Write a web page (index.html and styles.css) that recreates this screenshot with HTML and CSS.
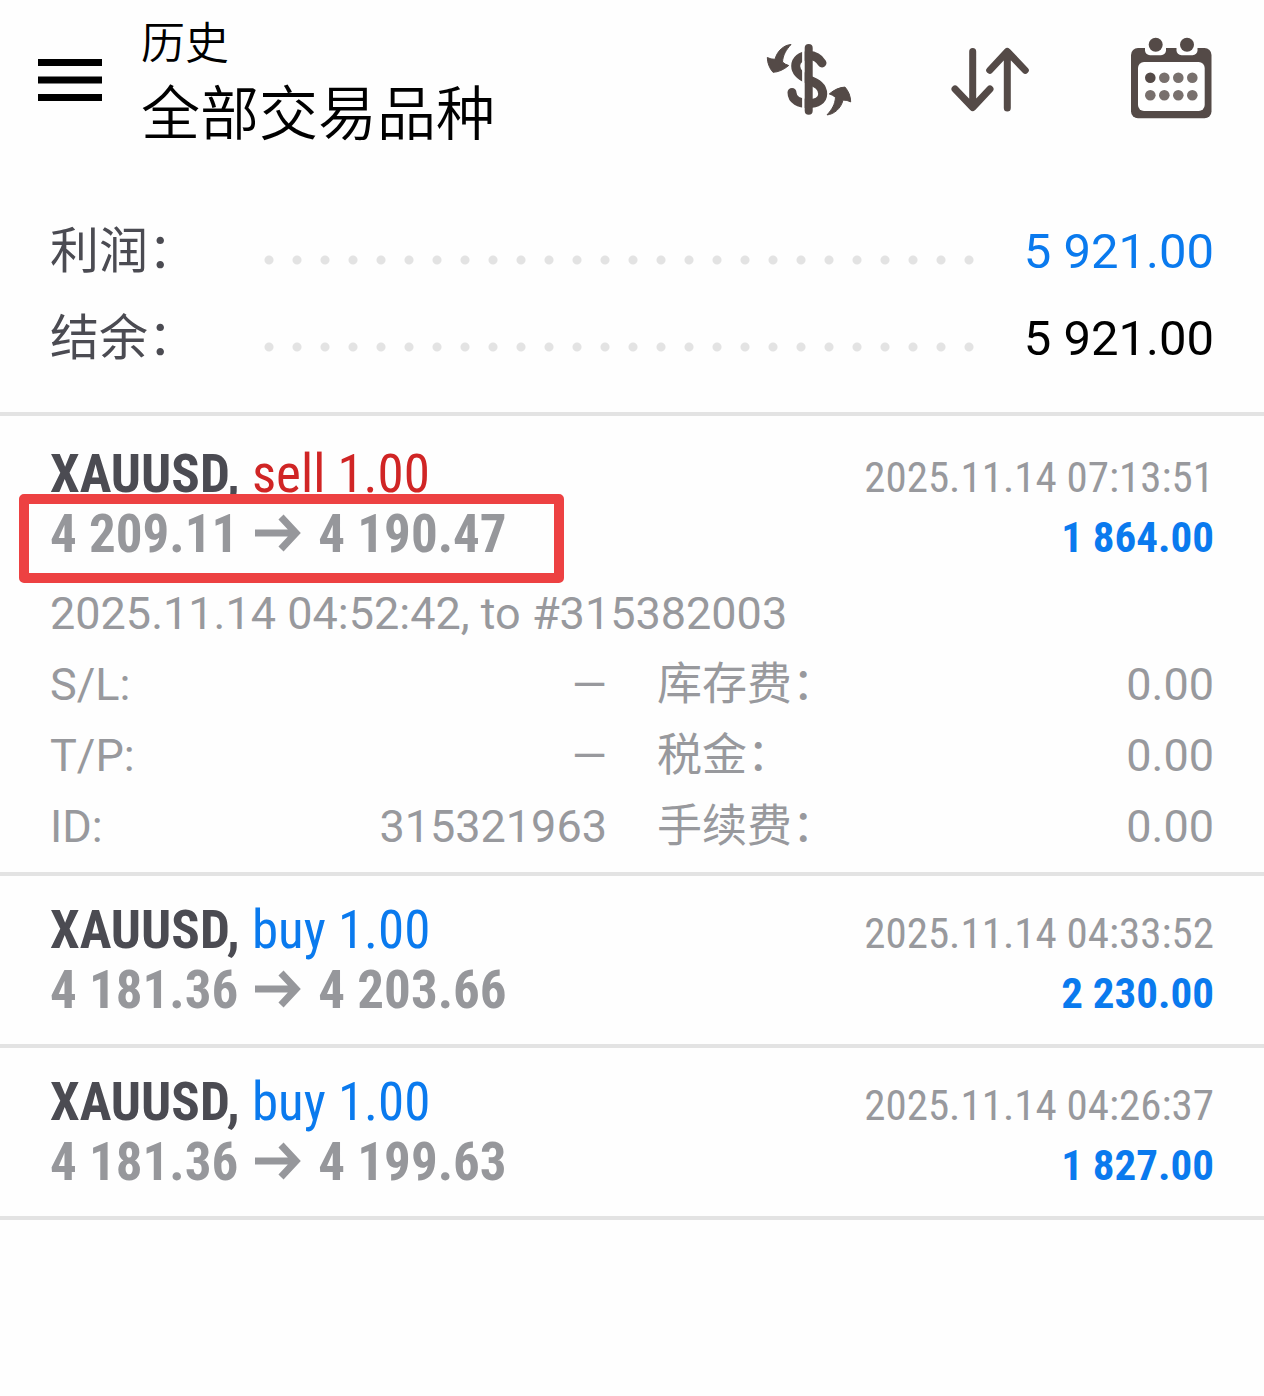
FILE: index.html
```html
<!DOCTYPE html>
<html lang="zh-CN">
<head>
<meta charset="utf-8">
<meta name="viewport" content="width=device-width, initial-scale=1">
<title>历史</title>
<link rel="stylesheet" href="styles.css">
</head>
<body>
<header class="topbar">
  <button class="menu" type="button" aria-label="菜单">
    <svg width="64" height="44" viewBox="0 0 64 44" aria-hidden="true"><path d="M0 4.5h64M0 22h64M0 39.5h64" stroke="currentColor" stroke-width="7"/></svg>
  </button>
  <div class="heading">
    <h1 class="title">历史</h1>
    <p class="subtitle">全部交易品种</p>
  </div>
  <div class="actions">
    <button class="action" type="button" aria-label="交易品种">
      <svg width="96" height="96" viewBox="0 0 96 96" aria-hidden="true">
        <path d="M61 31C58 26 53 23.5 47.7 23.5C40 23.5 34.7 28 34.7 34C34.7 41 41 45 48 48C56 51 61.7 54.5 61.7 62C61.7 68 56 71.5 47.7 71.5C38 71.5 31 68 31 60.5" fill="none" stroke="currentColor" stroke-width="9" stroke-linecap="round"/>
        <path d="M42.4 14v68" stroke="#fff" stroke-width="2.6"/>
        <path d="M47.7 16v62.7" stroke="currentColor" stroke-width="8" stroke-linecap="round"/>
        <path id="turn" d="M30 12.5C23 13 16 19 14 27.3Q10 27.5 6.3 25.5Q6.5 34 12 40.3Q20 40 27.7 33.5Q24 32.5 21.5 30C22 23 25 18 30 12.5Z" fill="currentColor" stroke="currentColor"/>
        <use href="#turn" transform="rotate(180 48 47.7)"/>
      </svg>
    </button>
    <button class="action" type="button" aria-label="排序">
      <svg width="96" height="96" viewBox="0 0 96 96" aria-hidden="true"><path d="M30.7 19.5V75M13 57L30.7 75.5L48 57M65.3 76V20M47.7 38.3L65.3 19.5L83.3 38.3" fill="none" stroke="currentColor" stroke-width="7" stroke-linecap="round" stroke-linejoin="round"/></svg>
    </button>
    <button class="action" type="button" aria-label="日期">
      <svg width="96" height="96" viewBox="0 0 96 96" aria-hidden="true">
        <rect x="8" y="16" width="80.5" height="70.3" rx="7" fill="currentColor"/>
        <rect x="22" y="6" width="21" height="17.3" rx="5" fill="#fff"/>
        <rect x="53.5" y="6" width="21" height="17.3" rx="5" fill="#fff"/>
        <rect x="15" y="30" width="66.7" height="49" rx="6" fill="#fff"/>
        <circle cx="32.7" cy="12.7" r="7" fill="currentColor"/><circle cx="64" cy="12.7" r="7" fill="currentColor"/>
        <circle cx="27.3" cy="45.7" r="5.3" fill="currentColor"/>
        <g fill="#78706d"><circle cx="41.3" cy="45.7" r="5.3"/><circle cx="55.3" cy="45.7" r="5.3"/><circle cx="69.3" cy="45.7" r="5.3"/><circle cx="27.3" cy="63.3" r="5.3"/><circle cx="41.3" cy="63.3" r="5.3"/><circle cx="55.3" cy="63.3" r="5.3"/><circle cx="69.3" cy="63.3" r="5.3"/></g>
      </svg>
    </button>
  </div>
</header>
<main>
  <dl class="summary">
    <div class="total"><dt class="total-label">利润：</dt><dd class="total-value gain">5 921.00</dd></div>
    <div class="total"><dt class="total-label">结余：</dt><dd class="total-value">5 921.00</dd></div>
  </dl>
  <ul class="deals">
    <li class="deal">
      <div class="line"><h2 class="symbol">XAUUSD, <span class="side sell">sell 1.00</span></h2><time class="time">2025.11.14 07:13:51</time></div>
      <div class="line"><p class="prices marked"><span>4 209.11</span><svg class="arrow" viewBox="0 0 46 40" role="img" aria-label="至"><path d="M0 20h41M26 4l15 16l-15 16" fill="none" stroke="currentColor" stroke-width="7"/></svg><span>4 190.47</span></p><strong class="profit">1 864.00</strong></div>
      <div class="details">
        <p class="opened">2025.11.14 04:52:42, to #315382003</p>
        <dl class="fields">
          <div class="field"><dt>S/L:</dt><dd>—</dd></div>
          <div class="field"><dt>库存费：</dt><dd>0.00</dd></div>
          <div class="field"><dt>T/P:</dt><dd>—</dd></div>
          <div class="field"><dt>税金：</dt><dd>0.00</dd></div>
          <div class="field"><dt>ID:</dt><dd>315321963</dd></div>
          <div class="field"><dt>手续费：</dt><dd>0.00</dd></div>
        </dl>
      </div>
    </li>
    <li class="deal">
      <div class="line"><h2 class="symbol">XAUUSD, <span class="side">buy 1.00</span></h2><time class="time">2025.11.14 04:33:52</time></div>
      <div class="line"><p class="prices"><span>4 181.36</span><svg class="arrow" viewBox="0 0 46 40" role="img" aria-label="至"><path d="M0 20h41M26 4l15 16l-15 16" fill="none" stroke="currentColor" stroke-width="7"/></svg><span>4 203.66</span></p><strong class="profit">2 230.00</strong></div>
    </li>
    <li class="deal">
      <div class="line"><h2 class="symbol">XAUUSD, <span class="side">buy 1.00</span></h2><time class="time">2025.11.14 04:26:37</time></div>
      <div class="line"><p class="prices"><span>4 181.36</span><svg class="arrow" viewBox="0 0 46 40" role="img" aria-label="至"><path d="M0 20h41M26 4l15 16l-15 16" fill="none" stroke="currentColor" stroke-width="7"/></svg><span>4 199.63</span></p><strong class="profit">1 827.00</strong></div>
    </li>
  </ul>
</main>
</body>
</html>
```
FILE: styles.css
```css
* { box-sizing: border-box; margin: 0; padding: 0; }

body {
  background: #fefefe;
  color: #000;
  font-family: Roboto, "Noto Sans CJK SC", sans-serif;
}

ul { list-style: none; }

button {
  border: 0;
  background: none;
  color: inherit;
}

svg { display: block; }

.topbar {
  display: flex;
  align-items: flex-start;
  padding: 8px 45px 0 38px;
}

.menu { padding-top: 50px; }

.heading {
  flex: 1;
  padding-left: 39px;
}

.title {
  font-size: 44px;
  font-weight: 350;
  line-height: 72px;
}

.subtitle {
  font-size: 59px;
  font-weight: 350;
  line-height: 70px;
}

.actions {
  display: flex;
  gap: 85px;
  padding-top: 24px;
  color: #544a47;
}

.summary {
  padding: 58px 50px 30px;
  border-bottom: 4px solid #e3e3e3;
}

.total {
  display: flex;
  align-items: center;
  font-size: 49px;
  line-height: 87px;
}

.total-label {
  width: 205px;
  color: #4b4b52;
}

.total-value {
  flex: 1;
  display: flex;
  gap: 41px;
}

.total-value::before {
  content: "";
  flex: 1;
  background: radial-gradient(circle at 14px 52px, #e3e3e3 4px, transparent 5px) 0 0 / 28px 87px round;
}

.gain { color: #0a7aee; }

.deals { padding-top: 4px; }

.deal {
  padding: 24px 50px;
  border-bottom: 4px solid #e3e3e3;
}

.deal:has(.details) { padding-bottom: 10px; }

.line {
  display: flex;
  justify-content: space-between;
  align-items: baseline;
  height: 60px;
  font-family: "Roboto Condensed", Roboto, sans-serif;
  font-size: 53px;
  line-height: 60px;
}

.symbol {
  color: #4b4b52;
  font-size: 53px;
  font-weight: 700;
}

.side {
  color: #0a7aee;
  font-weight: 400;
}

.sell { color: #d02525; }

.time {
  color: #98999d;
  font-size: 43px;
}

.prices {
  display: flex;
  gap: 17px;
  color: #96979b;
  font-weight: 700;
}

.arrow {
  width: 46px;
  height: 40px;
  margin-top: 9px;
}

.profit {
  color: #0a7aee;
  font-size: 43px;
}

.marked { position: relative; }

.marked::after {
  content: "";
  position: absolute;
  inset: -10px -57px -19px -31px;
  border: 10px solid #ed4142;
  border-radius: 5px;
}

.details {
  padding-top: 14px;
  color: #98999d;
  font-size: 45px;
  line-height: 71px;
}

.fields {
  display: grid;
  grid-template-columns: 1fr 1fr;
  column-gap: 50px;
}

.field {
  display: flex;
  justify-content: space-between;
}
```
